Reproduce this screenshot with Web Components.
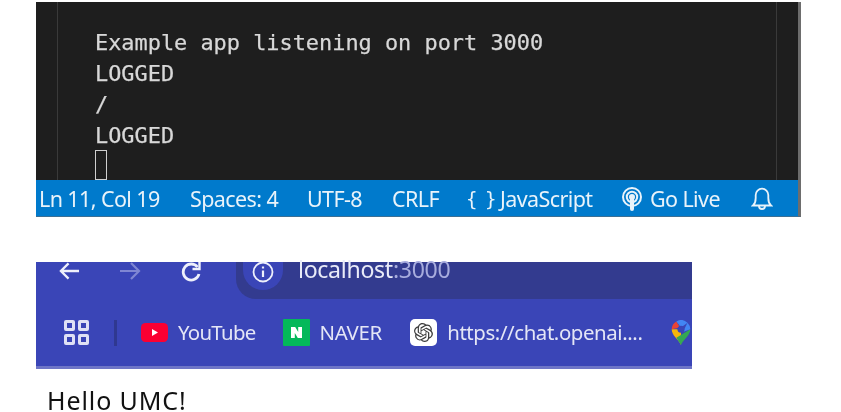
<!DOCTYPE html>
<html><head><meta charset="utf-8">
<style>
html,body{margin:0;padding:0;background:#fff;overflow:hidden}
body{width:841px;height:412px;padding:2px 0 0 36px;box-sizing:border-box;font-family:"Noto Sans",sans-serif}
</style></head><body>
<vs-terminal>
<span>Example app listening on port 3000</span>
<span>LOGGED</span>
<span>/</span>
<span>LOGGED</span>
</vs-terminal>
<vs-status></vs-status>
<browser-chrome></browser-chrome>
<hello-text>Hello UMC!</hello-text>
<script>
function def(name,html){customElements.define(name,class extends HTMLElement{constructor(){super();this.attachShadow({mode:'open'}).innerHTML=html}})}
def('vs-terminal',`<style>
:host{display:block;width:765px;height:178px;box-sizing:border-box;background:#1e1e1e;border-right:3px solid #6d6d6d;filter:blur(.35px)}
.in{height:100%;margin-left:21px;margin-right:21px;border-left:1px solid #3a3a3a;border-right:1px solid #3a3a3a;padding:24.5px 0 0 37px;box-sizing:border-box;overflow:hidden;display:flex;flex-direction:column;align-items:flex-start;
font:21.9px/31px "DejaVu Sans Mono",monospace;color:#d8d8d8;-webkit-text-stroke:.25px #d8d8d8}
::slotted(span){display:block;height:31px}
.c{width:10px;height:29px;border:1px solid #d0d0d0;margin-top:-.5px}
</style><div class="in"><slot></slot><div class="c"></div></div>`);
def('vs-status',`<style>
:host{display:flex;align-items:center;width:765px;height:37px;background:#007acc;box-sizing:border-box;border-bottom:1px solid #3b6f94;border-right:3px solid #6d6d6d;color:#e9f3fa;font:21.5px/36px "Noto Sans",sans-serif;letter-spacing:-.6px;white-space:nowrap;padding:1px 0 0 3px;filter:blur(.35px)}
span{display:block}
svg{display:block;flex:none}
</style>
<span style="width:151px">Ln 11, Col 19</span>
<span style="width:117px">Spaces: 4</span>
<span style="width:85px">UTF-8</span>
<span style="width:74px">CRLF</span>
<span style="width:34px;font-family:'DejaVu Sans Mono',monospace;letter-spacing:0;font-size:19px;word-spacing:-4px">{ }</span>
<span style="width:121px">JavaScript</span>
<svg width="22" height="26" viewBox="0 0 22 26" style="margin-right:7px" fill="none" stroke="#e9f3fa" stroke-width="2"><circle cx="11" cy="11" r="9"/><circle cx="11" cy="11" r="5.2"/><circle cx="11" cy="11" r="2" fill="#e9f3fa"/><path d="M11 12v11" stroke-width="4" stroke-linecap="round"/></svg>
<span style="width:101px">Go Live</span>
<svg width="22" height="25" viewBox="0 0 22 25" fill="none" stroke="#e9f3fa" stroke-width="1.8"><path d="M2 19.5h18c-2.200-2-2.700-4-2.700-7.500V9A6.300 6.300 0 0 0 4.700 9v3c0 3.500-.5 5.500-2.700 7.500z"/><path d="M8 20a3 3 0 0 0 6 0"/></svg>`);
def('browser-chrome',`<style>
:host{display:block;width:656px;height:107px;margin-top:45px;background:#3a45b7;border-bottom:3px solid #6e75c7;box-sizing:border-box;font:20.4px/1 "Noto Sans",sans-serif;color:#e4e6f6;letter-spacing:-.35px;filter:blur(.35px)}
.top{height:37px;display:flex;align-items:flex-start}
.nav{display:flex;flex:none;width:200px}
svg{display:block;flex:none}
.url{flex:1;height:37px;background:#333b8f;border-bottom-left-radius:20px;display:flex;align-items:flex-start}
.inf{width:40px;height:28px;background:#3a45b7;border-bottom-left-radius:20px;border-bottom-right-radius:20px;display:flex;justify-content:center;margin:0 15px 0 7px;flex:none}
.host{font-size:23.1px;line-height:14px;color:#e9ebf8;letter-spacing:-.3px}.host i{font-style:normal;color:#a7acdd}
.bm{height:67px;display:flex;align-items:center;white-space:nowrap;overflow:hidden}
</style>
<div class="top">
<div class="nav">
<svg style="margin-left:23px" width="21" height="18" viewBox="0 0 22 18" fill="none" stroke="#eef0fb" stroke-width="2.400"><path d="M21 9H2M10 1 2 9l8 8"/></svg>
<svg style="margin-left:39px" width="22" height="18" viewBox="0 0 22 18" fill="none" stroke="#7f86d3" stroke-width="2.200"><path d="M1 9h19M12 1l8 8-8 8"/></svg>
<svg style="margin-left:39px" width="22" height="20" viewBox="0 0 22 20" fill="none" stroke="#eef0fb" stroke-width="2.800"><path d="M19 12a8 8 0 1 1-1.500-7"/><path d="M19.500 0v7h-7" stroke-width="2.400"/></svg>
</div>
<div class="url">
<div class="inf"><svg width="22" height="22" viewBox="0 0 22 22" fill="none" stroke="#eef0fb" stroke-width="1.800" style="margin-top:-1px"><circle cx="11" cy="11" r="9.500"/><path d="M11 9.500V16M11 5.500v2" stroke-width="2.200"/></svg></div>
<span class="host">localhost<i>:3000</i></span>
</div>
</div>
<div class="bm">
<svg style="margin-left:28px" width="25" height="25" viewBox="0 0 25 25" fill="none" stroke="#dfe1f5" stroke-width="3"><rect x="1.500" y="1.500" width="8" height="8" rx=".5"/><rect x="15.500" y="1.500" width="8" height="8" rx=".5"/><rect x="1.500" y="15.500" width="8" height="8" rx=".5"/><rect x="15.500" y="15.500" width="8" height="8" rx=".5"/></svg>
<div style="width:3px;height:26px;background:#2f3890;margin-left:25px;flex:none"></div>
<svg style="margin-left:24px" width="27" height="19" viewBox="0 0 27 19"><rect width="27" height="19" rx="4.500" fill="#fb0032"/><path d="M11 6l6 3.500-6 3.500z" fill="#fff"/></svg>
<span style="margin-left:10px;width:106px;letter-spacing:-.7px">YouTube</span>
<svg width="27" height="27" viewBox="0 0 27 27"><rect width="27" height="27" rx="1" fill="#04b85a"/><path d="M8 8h4.200l3 5V8H19v11h-4.200l-3-5v5H8z" fill="#fff"/></svg>
<span style="margin-left:10px;width:91px">NAVER</span>
<svg style="margin-left:1px" width="27" height="27" viewBox="0 0 27 27"><rect width="27" height="27" rx="5" fill="#fff"/><g transform="translate(4 4) scale(.79)"><path fill="#3c3c3c" d="M22.2819 9.8211a5.9847 5.9847 0 0 0-.5157-4.9108 6.0462 6.0462 0 0 0-6.5098-2.9A6.0651 6.0651 0 0 0 4.9807 4.1818a5.9847 5.9847 0 0 0-3.9977 2.9 6.0462 6.0462 0 0 0 .7427 7.0966 5.98 5.98 0 0 0 .511 4.9107 6.051 6.051 0 0 0 6.5146 2.9001A5.9847 5.9847 0 0 0 13.2599 24a6.0557 6.0557 0 0 0 5.7718-4.2058 5.9894 5.9894 0 0 0 3.9977-2.9001 6.0557 6.0557 0 0 0-.7475-7.0729zm-9.022 12.6081a4.4755 4.4755 0 0 1-2.8764-1.0408l.1419-.0804 4.7783-2.7582a.7948.7948 0 0 0 .3927-.6813v-6.7369l2.02 1.1686a.071.071 0 0 1 .038.052v5.5826a4.504 4.504 0 0 1-4.4945 4.4944zm-9.6607-4.1254a4.4708 4.4708 0 0 1-.5346-3.0137l.142.0852 4.783 2.7582a.7712.7712 0 0 0 .7806 0l5.8428-3.3685v2.3324a.0804.0804 0 0 1-.0332.0615L9.74 19.9502a4.4992 4.4992 0 0 1-6.1408-1.6464zM2.3408 7.8956a4.485 4.485 0 0 1 2.3655-1.9728V11.6a.7664.7664 0 0 0 .3879.6765l5.8144 3.3543-2.0201 1.1685a.0757.0757 0 0 1-.071 0l-4.8303-2.7865A4.504 4.504 0 0 1 2.3408 7.872zm16.5963 3.8558L13.1038 8.364 15.1192 7.2a.0757.0757 0 0 1 .071 0l4.8303 2.7913a4.4944 4.4944 0 0 1-.6765 8.1042v-5.6772a.79.79 0 0 0-.407-.667zm2.0107-3.0231l-.142-.0852-4.7735-2.7818a.7759.7759 0 0 0-.7854 0L9.409 9.2297V6.8974a.0662.0662 0 0 1 .0284-.0615l4.8303-2.7866a4.4992 4.4992 0 0 1 6.6802 4.66zM8.3065 12.863l-2.02-1.1638a.0804.0804 0 0 1-.038-.0567V6.0742a4.4992 4.4992 0 0 1 7.3757-3.4537l-.142.0805L8.704 5.459a.7948.7948 0 0 0-.3927.6813zm1.0976-2.3654l2.602-1.4998 2.6069 1.4998v2.9994l-2.5974 1.4997-2.6067-1.4997Z"/></g></svg>
<span style="margin-left:10px;width:226px;letter-spacing:-.4px">https://chat.openai....</span>
<svg width="22" height="26" viewBox="0 0 20 28"><path d="M10 27C7 20 0 17 0 10h10z" fill="#f5b50a"/><path d="M10 27l-5-8 15-9c0 7-7 10-10 17z" fill="#34a853"/><path d="M0 10A10 10 0 0 1 5 1.500L9 8z" fill="#ea4335"/><path d="M5 1.500A10 10 0 0 1 17 3l-7 5z" fill="#4285f4"/><path d="M17 3a10 10 0 0 1 3 7l-8 3z" fill="#4285f4"/><circle cx="10" cy="10" r="3.800" fill="#3a45b7"/></svg>
</div>`);
def('hello-text',`<style>:host{display:block;margin:19px 0 0 11px;font:25px/24px "Noto Sans",sans-serif;color:#111;letter-spacing:.9px;white-space:nowrap;filter:blur(.3px)}</style><slot></slot>`);
</script>
</body></html>
